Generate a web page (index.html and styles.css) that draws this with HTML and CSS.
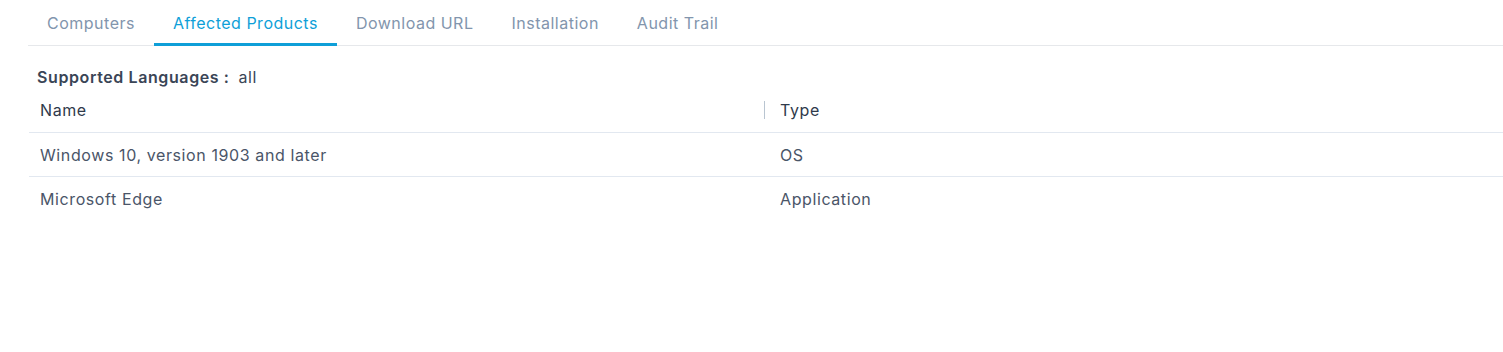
FILE: index.html
```html
<!DOCTYPE html>
<html lang="en">
<head>
<meta charset="utf-8">
<title>Affected Products</title>
<link rel="stylesheet" href="styles.css">
</head>
<body>
<div class="page">
  <nav class="tabs">
    <div class="tab">Computers</div>
    <div class="tab active">Affected Products</div>
    <div class="tab">Download URL</div>
    <div class="tab">Installation</div>
    <div class="tab">Audit Trail</div>
  </nav>
  <section class="content">
    <div class="lang"><span class="lang-label">Supported Languages :</span><span class="lang-value">all</span></div>
    <div class="table">
      <div class="row head">
        <div class="cell">Name</div>
        <div class="cell second divided">Type</div>
      </div>
      <div class="row">
        <div class="cell">Windows 10, version 1903 and later</div>
        <div class="cell second">OS</div>
      </div>
      <div class="row">
        <div class="cell">Microsoft Edge</div>
        <div class="cell second">Application</div>
      </div>
    </div>
  </section>
</div>
</body>
</html>
```
FILE: styles.css
```css
html, body {
  margin: 0;
  padding: 0;
  background: #ffffff;
}
body {
  font-family: Inter, "Noto Sans", "Liberation Sans", sans-serif;
  font-size: 16px;
  letter-spacing: 0.6px;
  color: #4a5568;
}
.page {
  padding-left: 28px;
}
.tabs {
  display: flex;
  border-bottom: 1px solid #e6e8eb;
}
.tab {
  box-sizing: border-box;
  height: 46px;
  padding: 2px 19px 0 19px;
  display: flex;
  align-items: center;
  color: #8295ad;
  letter-spacing: 0.5px;
  border-bottom: 3px solid transparent;
  margin-bottom: -1px;
  white-space: nowrap;
}
.tab.active {
  color: #0e9fd8;
  border-bottom-color: #0e9fd8;
}
.content {
  padding-left: 1px;
}
.lang {
  margin-top: 20px;
  height: 22px;
  line-height: 22px;
  padding-left: 8px;
  color: #3a4556;
}
.lang-label {
  font-weight: 600;
  margin-right: 9px;
}
.table {
  display: flex;
  flex-direction: column;
}
.row {
  box-sizing: border-box;
  display: grid;
  grid-template-columns: 1fr 1fr;
  height: 44px;
  align-items: center;
  border-bottom: 1px solid #e2e8f0;
}
.row.head {
  height: 45px;
  color: #2f3a4b;
}
.row:last-child {
  border-bottom: none;
}
.cell {
  padding-left: 11px;
  white-space: nowrap;
  position: relative;
}
.cell.second {
  padding-left: 14px;
}
.cell.divided::before {
  content: "";
  position: absolute;
  left: -2px;
  top: 1px;
  width: 1px;
  height: 18px;
  background: #b9c5d1;
}
```
